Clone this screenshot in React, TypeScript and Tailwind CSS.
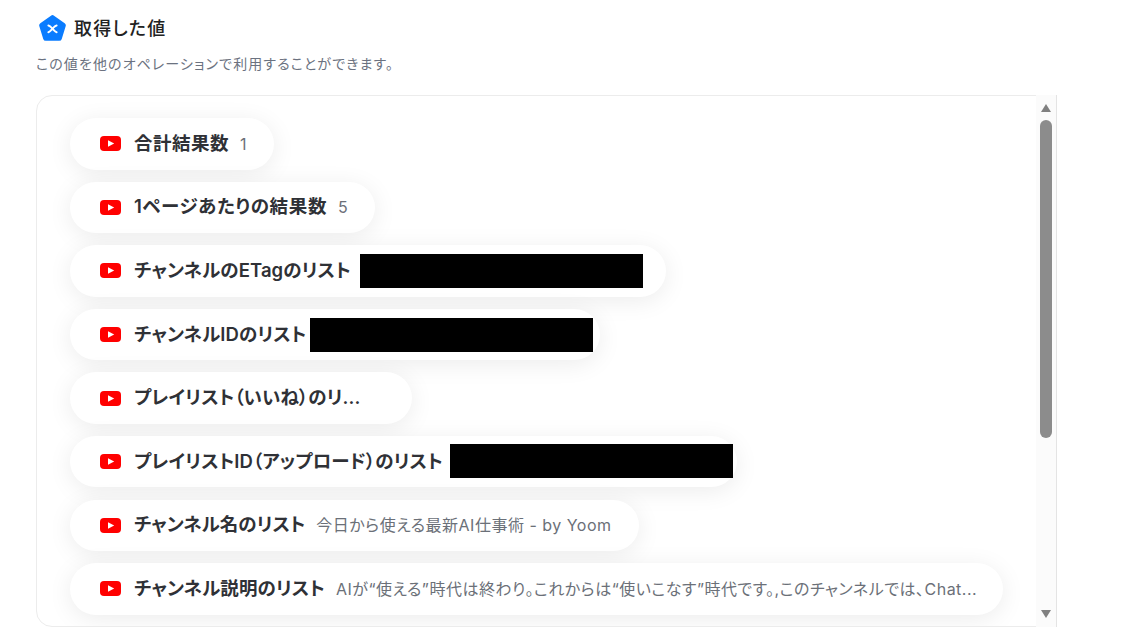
const rows = [
  { label: '合計結果数', value: '1', width: 'w-[204px]', track: 'tracking-[0.5px]' },
  { label: '1ページあたりの結果数', value: '5', width: 'w-[305px]', track: 'tracking-[0.65px]' },
  { label: 'チャンネルのETagのリスト', mask: 'ml-[9px]', width: 'w-[596px]', track: 'tracking-[0.1px]' },
  { label: 'チャンネルIDのリスト', mask: 'ml-[4px]', width: 'w-[530px]', track: 'tracking-[0.1px]' },
  { label: 'プレイリスト（いいね）のリ...', width: 'w-[342px]', track: 'tracking-[0.1px]' },
  { label: 'プレイリストID（アップロード）のリスト', mask: 'ml-[7px] mb-[2px]', width: 'w-[667px]', track: 'tracking-[0.1px]' },
  { label: 'チャンネル名のリスト', value: '今日から使える最新AI仕事術 - by Yoom', width: 'w-[569px]', track: 'tracking-[0px]' },
  { label: 'チャンネル説明のリスト', value: 'AIが“使える”時代は終わり。これからは“使いこなす”時代です。,このチャンネルでは、Chat...', width: 'w-[933px]', track: 'tracking-[0.1px]' },
];

function YoutubeIcon() {
  return (
    <svg width="21" height="15" viewBox="0 0 21 15" className="shrink-0">
      <rect x="0" y="0" width="21" height="15" rx="4" fill="#ff0000" />
      <path d="M8 4.2 L14.2 7.5 L8 10.8 Z" fill="#fff" />
    </svg>
  );
}

function Logo() {
  return (
    <svg width="27" height="26" viewBox="1.6 1 24.8 23.9" className="-mt-[2px] shrink-0">
      <path
        d="M12.6 1.6 a2.4 2.4 0 0 1 2.8 0 L25.2 8.6 a2.4 2.4 0 0 1 .9 2.7 L22.5 23 a2.4 2.4 0 0 1 -2.3 1.7 H7.8 A2.4 2.4 0 0 1 5.5 23 L1.9 11.3 a2.4 2.4 0 0 1 .9 -2.7 Z"
        fill="#0a7cff"
      />
      <path d="M10.2 10.6 C12 11 12.6 12.4 14 13.6 C15.4 14.8 16 16.4 17.8 16.8 M17.8 10.6 C16 11 15.4 12.4 14 13.6 C12.6 14.8 12 16.4 10.2 16.8" stroke="#fff" strokeWidth="1.8" fill="none" strokeLinecap="round" />
    </svg>
  );
}

export default function App() {
  return (
    <div className="w-[1136px] h-[633px] overflow-hidden bg-white font-['Inter','Noto_Sans_CJK_JP',sans-serif] [font-feature-settings:'palt']">
      <div className="pl-[36px] pt-[15px]">
        <div className="flex items-center gap-[8px] pl-[3px] h-[28px]">
          <Logo />
          <h1 className="text-[18px] font-medium leading-[28px] tracking-[1.2px] text-[#222]">取得した値</h1>
        </div>
        <p className="mt-[11px] text-[14px] leading-[20px] tracking-[1.1px] text-[#6b7280]">この値を他のオペレーションで利用することができます。</p>

        <div className="relative mt-[21px] w-[1021px] h-[532px] rounded-l-[16px] border border-[#ececec]">
          <div className="h-full overflow-hidden rounded-l-[16px]">
            <div className="flex flex-col gap-[12.1px] pl-[33px] pt-[22px]">
              {rows.map((row) => (
                <div
                  key={row.label}
                  className={`flex items-center h-[51.5px] shrink-0 rounded-full bg-white pl-[30px] shadow-[0_4px_24px_rgba(0,0,0,0.08)] ${row.width}`}
                >
                  <YoutubeIcon />
                  <span className={`ml-[13px] whitespace-nowrap text-[18.5px] font-semibold text-[#2f3136] ${row.track}`}>{row.label}</span>
                  {row.value && <span className="ml-[11px] whitespace-nowrap text-[16px] tracking-[0.5px] text-[#6b7078]">{row.value}</span>}
                  {row.mask && <span className={`h-[34px] w-[283px] shrink-0 bg-black ${row.mask}`} />}
                </div>
              ))}
            </div>
          </div>

          <div className="absolute -right-px -top-px -bottom-px w-[21px] border-r border-[#e4e4e4] bg-[#fbfbfb] flex flex-col items-center pt-[9px]">
            <div className="mr-[1px] h-0 w-0 border-x-[5px] border-b-[8px] border-x-transparent border-b-[#808080]" />
            <div className="mr-[1px] mt-[8px] h-[318px] w-[12px] rounded-full bg-[#8c8c8c]" />
            <div className="mr-[1px] mt-auto mb-[9px] h-0 w-0 border-x-[5px] border-t-[8px] border-x-transparent border-t-[#808080]" />
          </div>
        </div>
      </div>
    </div>
  );
}
